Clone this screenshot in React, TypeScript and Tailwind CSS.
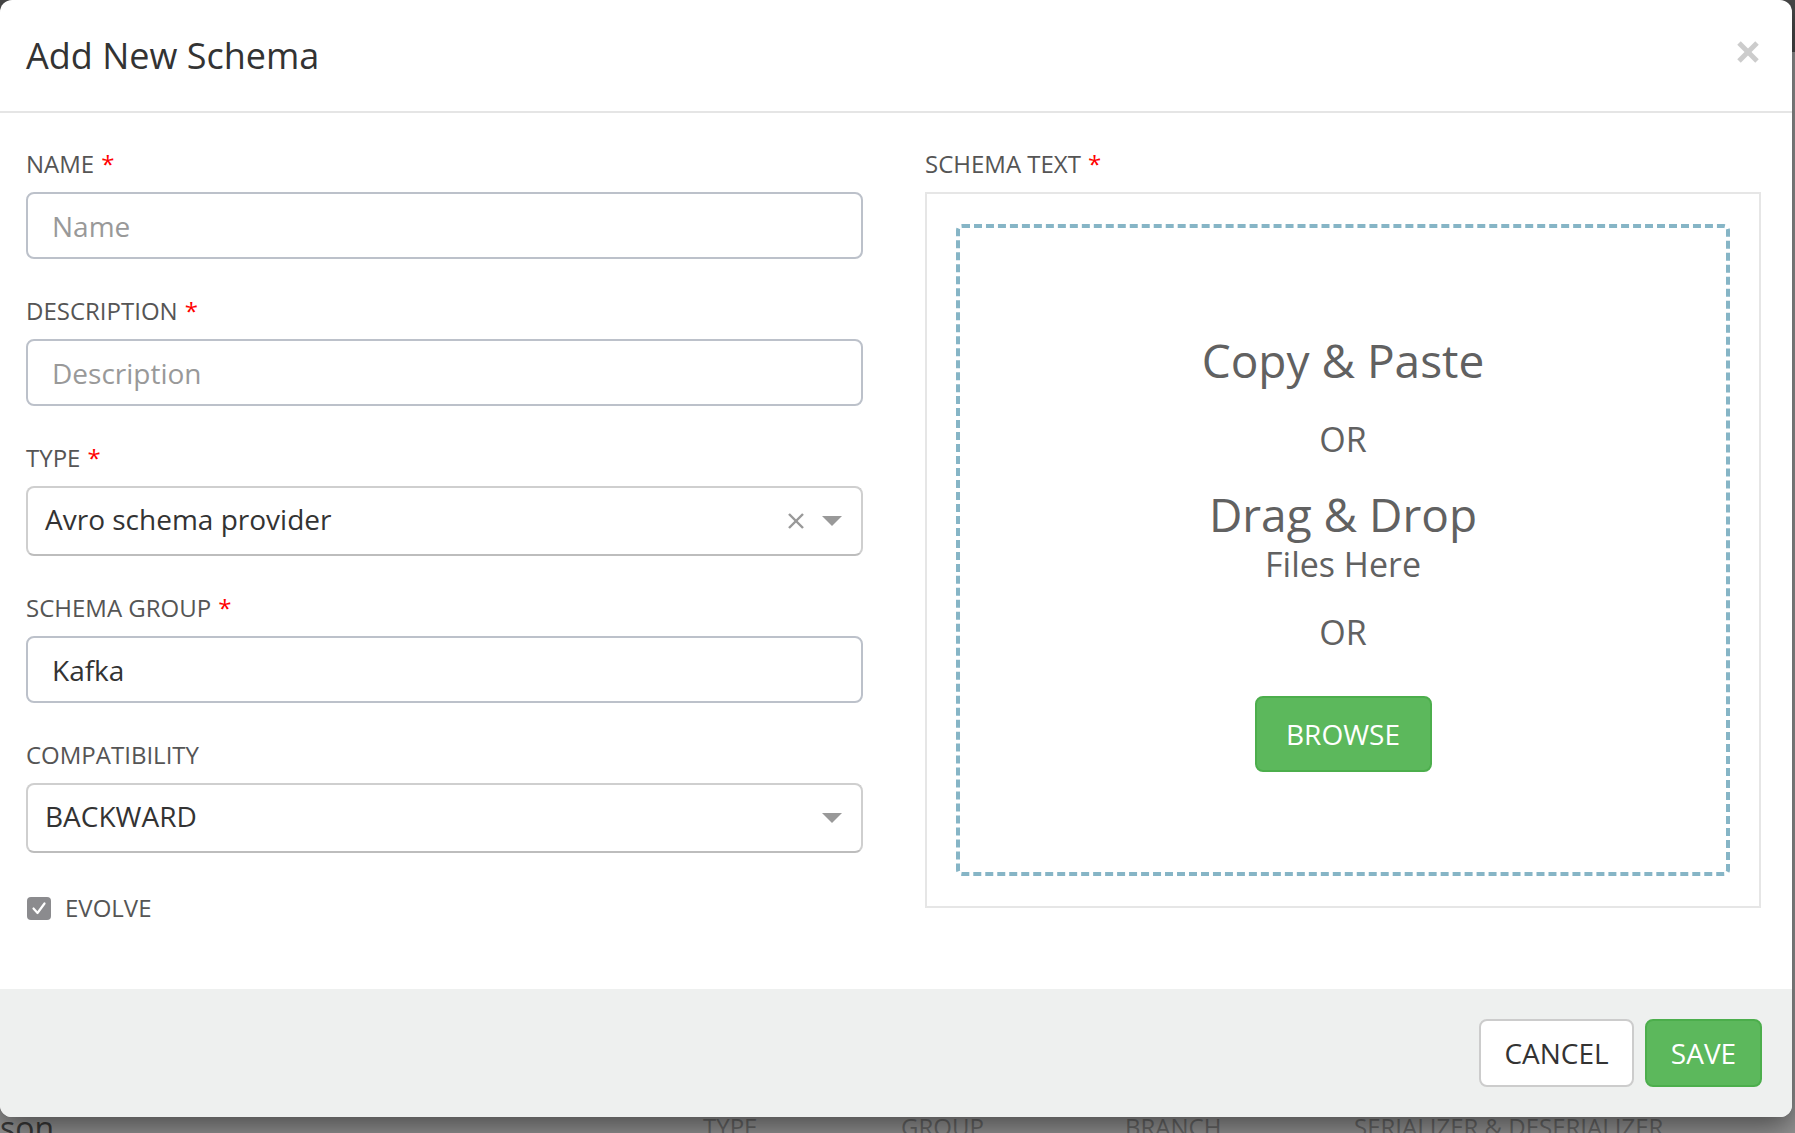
import React from "react";

const FONT = "font-['Open_Sans',sans-serif]";

function Label({ text, required }: { text: string; required?: boolean }) {
  return (
    <div className="text-[24px] leading-[24px] text-[#555555] mb-[16px] whitespace-nowrap">
      {text}
      {required && <span className="text-[#ff0000] ml-[7px]">*</span>}
    </div>
  );
}

function TextInput({ placeholder, value }: { placeholder: string; value?: string }) {
  return (
    <input
      readOnly
      defaultValue={value}
      placeholder={placeholder}
      className={`${FONT} block w-full h-[67px] border-2 border-[#bcc1ca] rounded-[8px] pl-[24px] text-[28px] text-[#333333] placeholder:text-[#999999] outline-none bg-white`}
    />
  );
}

function ArrowDown() {
  return (
    <svg width="20" height="10" viewBox="0 0 20 10" className="block">
      <polygon points="0,0 20,0 10,10" fill="#999999" />
    </svg>
  );
}

function ClearX() {
  return (
    <svg width="18" height="18" viewBox="0 0 18 18" className="block">
      <line x1="2" y1="2" x2="16" y2="16" stroke="#999999" strokeWidth="2.4" />
      <line x1="16" y1="2" x2="2" y2="16" stroke="#999999" strokeWidth="2.4" />
    </svg>
  );
}

function Select({ value, clearable }: { value: string; clearable?: boolean }) {
  return (
    <div className="w-full h-[70px] border-2 border-[#cfcfcf] border-b-[#bdbdbd] rounded-[8px] flex items-center pl-[17px] pr-[19px] bg-white">
      <div className="flex-1 text-[28px] leading-[36px] pb-[5px] text-[#333333] whitespace-nowrap">{value}</div>
      {clearable && (
        <div className="mr-[17px]">
          <ClearX />
        </div>
      )}
      <ArrowDown />
    </div>
  );
}

export default function App() {
  return (
    <div className={`${FONT} relative w-full h-[1133px] overflow-hidden bg-[#959595]`}>
      {/* page behind backdrop */}
      <div className="h-[52px] bg-[#4a4a4a]" />
      <div className="flex items-start pt-[1060px] text-[#686868] whitespace-nowrap">
        <div className="w-[703px] text-[32px] leading-[32px] text-[#3a3a3a]">son</div>
        <div className="w-[198px] mt-[3px] text-[24px] leading-[24px]">TYPE</div>
        <div className="w-[224px] mt-[3px] text-[24px] leading-[24px]">GROUP</div>
        <div className="w-[229px] mt-[3px] text-[24px] leading-[24px]">BRANCH</div>
        <div className="mt-[3px] text-[24px] leading-[24px]">SERIALIZER &amp; DESERIALIZER</div>
      </div>

      {/* modal */}
      <div className="absolute top-0 left-0 w-[1792px] bg-white rounded-[12px] overflow-hidden shadow-[0_10px_30px_rgba(0,0,0,0.5)] z-10">
        {/* header */}
        <div className="h-[113px] border-b-2 border-[#e5e5e5] flex items-center pl-[26px] pr-[33px]">
          <div className="flex-1 text-[36px] leading-[36px] text-[#333333]">Add New Schema</div>
          <svg width="22" height="22" viewBox="0 0 22 22" className="block -mt-[8px]">
            <line x1="2" y1="2" x2="20" y2="20" stroke="#cccccc" strokeWidth="5" />
            <line x1="20" y1="2" x2="2" y2="20" stroke="#cccccc" strokeWidth="5" />
          </svg>
        </div>

        {/* body */}
        <div className="h-[876px] pt-[39px] pl-[26px] pr-[31px] grid grid-cols-[837px_836px] gap-x-[62px] items-start">
          {/* left column */}
          <div className="flex flex-col">
            <Label text="NAME" required />
            <TextInput placeholder="Name" />

            <div className="mt-[40px]">
              <Label text="DESCRIPTION" required />
              <TextInput placeholder="Description" />
            </div>

            <div className="mt-[40px]">
              <Label text="TYPE" required />
              <Select value="Avro schema provider" clearable />
            </div>

            <div className="mt-[40px]">
              <Label text="SCHEMA GROUP" required />
              <TextInput placeholder="Schema Group" value="Kafka" />
            </div>

            <div className="mt-[40px]">
              <Label text="COMPATIBILITY" />
              <Select value="BACKWARD" />
            </div>

            <div className="mt-[43px] flex items-center pl-[1px]">
              <svg width="24" height="23" viewBox="0 0 24 23" className="block">
                <rect x="0" y="0" width="24" height="23" rx="4" fill="#8b8b8e" />
                <path d="M6.5 11.5 L10.5 16 L17.5 6.5" fill="none" stroke="#ffffff" strokeWidth="2.2" strokeLinecap="round" strokeLinejoin="round" />
              </svg>
              <span className="ml-[14px] text-[24px] leading-[24px] text-[#555555]">EVOLVE</span>
            </div>
          </div>

          {/* right column */}
          <div className="flex flex-col">
            <Label text="SCHEMA TEXT" required />
            <div className="h-[716px] border-2 border-[#e6e6e6] px-[29px] pt-[30px]">
              <div className="h-[652px] border-4 border-dashed border-[#86b5c6] rounded-[6px] flex flex-col items-center pt-[109px] text-[#616161]">
                <div className="text-[46px] leading-[46px]">Copy &amp; Paste</div>
                <div className="mt-[39px] text-[34px] leading-[34px]">OR</div>
                <div className="mt-[35px] text-[46px] leading-[46px]">Drag &amp; Drop</div>
                <div className="mt-[10px] text-[34px] leading-[34px]">Files Here</div>
                <div className="mt-[34px] text-[34px] leading-[34px]">OR</div>
                <button className="mt-[47px] w-[177px] h-[76px] bg-[#5cb85c] border-2 border-[#4cae4c] rounded-[8px] text-white text-[28px] leading-[28px] flex items-center justify-center">
                  BROWSE
                </button>
              </div>
            </div>
          </div>
        </div>

        {/* footer */}
        <div className="h-[128px] bg-[#eef0ef] flex items-center justify-end pr-[30px] gap-[11px]">
          <button className="w-[155px] h-[68px] bg-white border-2 border-[#cccccc] rounded-[8px] text-[#333333] text-[28px] leading-[28px] flex items-center justify-center">
            CANCEL
          </button>
          <button className="w-[117px] h-[68px] bg-[#5cb85c] border-2 border-[#4cae4c] rounded-[8px] text-white text-[28px] leading-[28px] flex items-center justify-center">
            SAVE
          </button>
        </div>
      </div>
    </div>
  );
}
